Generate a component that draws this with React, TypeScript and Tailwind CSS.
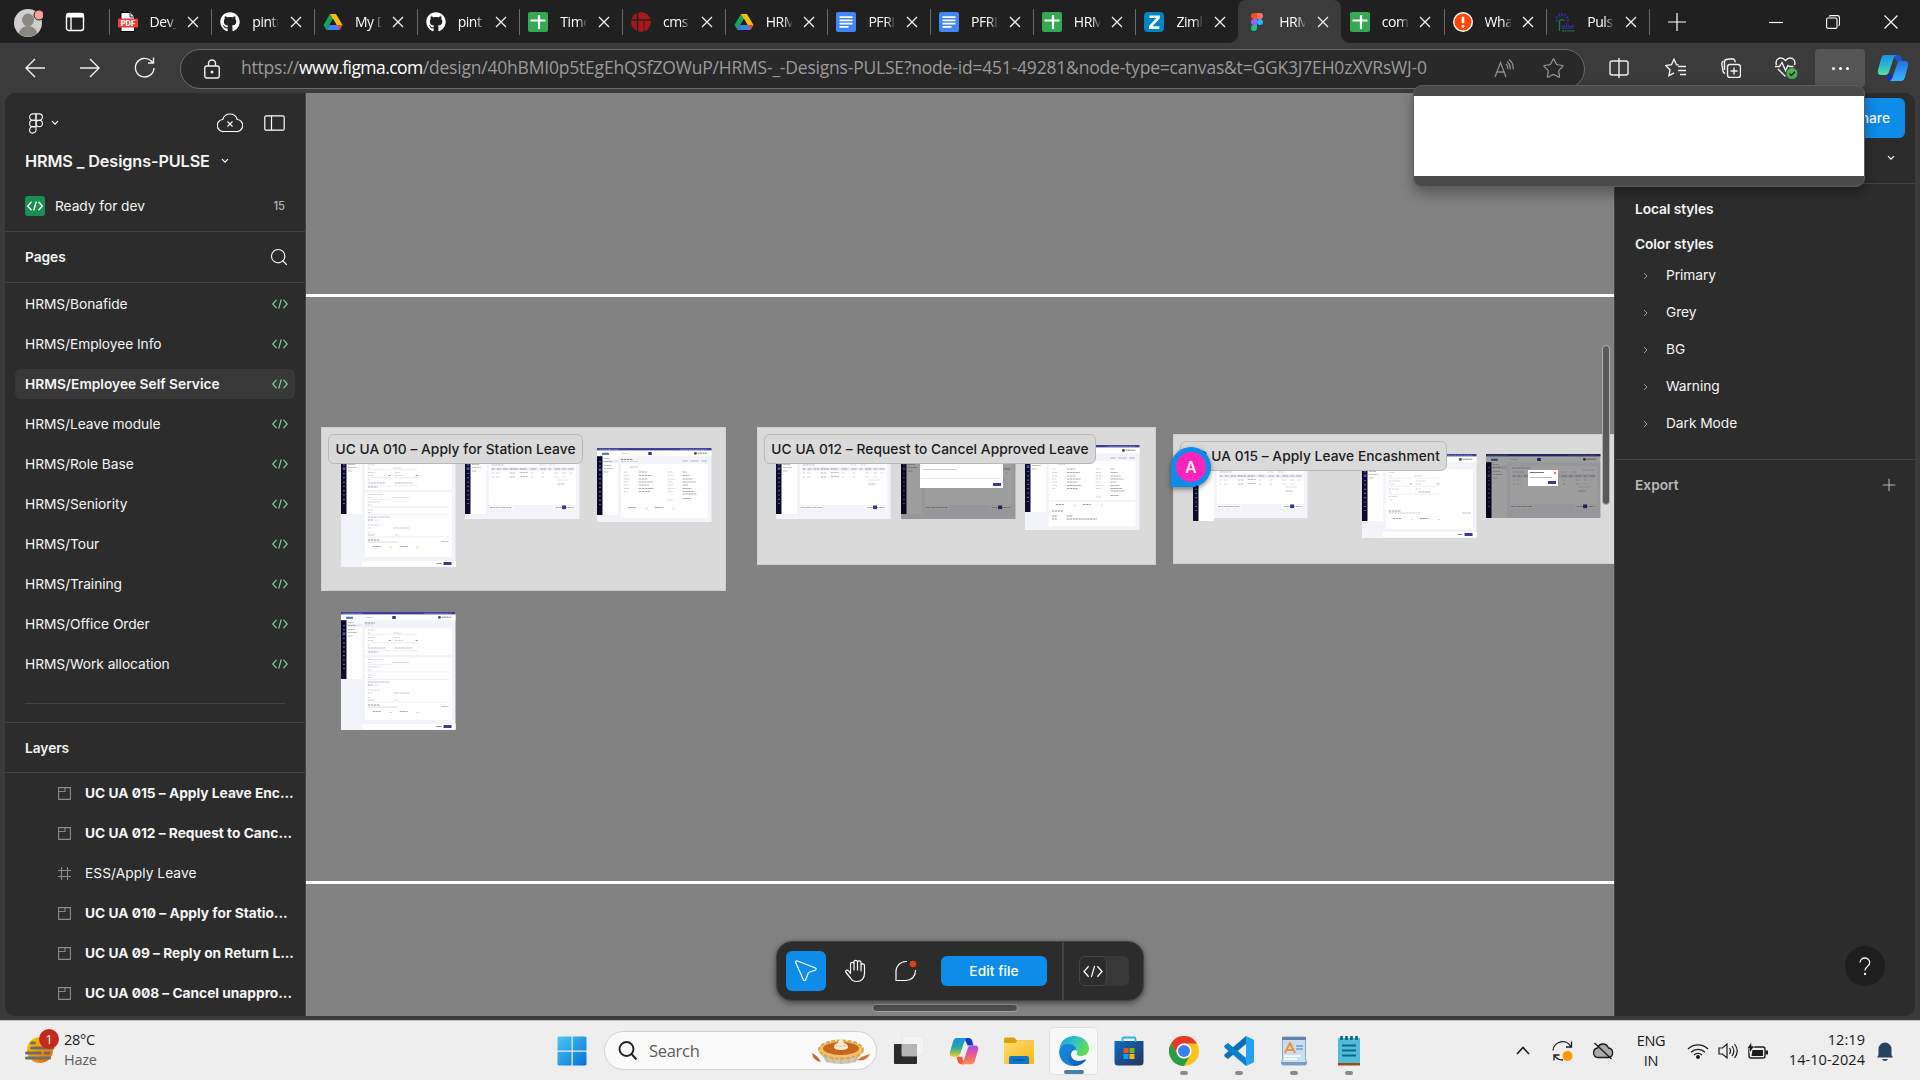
import React from "react";
import { FaGithub } from "react-icons/fa";
import { Figma, Search, Star, Plus } from "lucide-react";

type Kids = { children?: React.ReactNode };

/* ---------- favicons ---------- */
const Pdf = () => (
  <svg width="20" height="20" viewBox="0 0 20 20">
    <path d="M3 0.5h9l4.500 4.500v14.500h-13.500z" fill="#fff" stroke="#000" />
    <path d="M12 .5v4.500h4.500" fill="#ddd" stroke="#000" strokeWidth=".8" />
    <rect x="0" y="6.500" width="20" height="9" rx="1" fill="#f33b3b" />
    <text x="10" y="14" fontSize="7.500" fontWeight="800" textAnchor="middle" fill="#fff" fontFamily="Inter, sans-serif">PDF</text>
  </svg>
);
const Git = () => <FaGithub size={20} color="#fff" />;
const Drive = () => (
  <svg width="20" height="20" viewBox="0 0 20 20">
    <path d="M7 2h6l-6.500 11L3.500 18 .5 13z" fill="#1ea05a" />
    <path d="M7 2h6l6.500 11h-6z" fill="#fbbc05" />
    <path d="M3.500 18 6.500 13h13L16.500 18z" fill="#3f80f3" />
    <path d="M14 13h5.500L16.500 18z" fill="#e94235" />
    <path d="M10 6.800 6.500 13h7z" fill="#202020" />
  </svg>
);
const Sheets = () => (
  <svg width="20" height="20" viewBox="0 0 20 20">
    <rect width="20" height="20" rx="2" fill="#34a853" />
    <path d="M11 3v14M2.500 8.500h15" stroke="#fff" strokeWidth="2.200" />
  </svg>
);
const Docs = () => (
  <svg width="20" height="20" viewBox="0 0 20 20">
    <rect width="20" height="20" rx="2" fill="#4285f4" />
    <path d="M3.500 5.200h13M3.500 8.400h13M3.500 11.600h13M3.500 14.800h9" stroke="#fff" strokeWidth="1.700" />
  </svg>
);
const Cms = () => (
  <svg width="20" height="20" viewBox="0 0 20 20">
    <circle cx="10" cy="10" r="10" fill="#a8181e" />
    <path d="M6.500 0v20M0 8h20" stroke="#202020" strokeWidth="1.500" />
    <path d="M13 9v11" stroke="#202020" strokeWidth=".8" />
  </svg>
);
const Zim = () => (
  <svg width="20" height="20" viewBox="0 0 20 20">
    <rect width="20" height="20" rx="4" fill="#0087c3" />
    <path d="M5.500 4.700h9v1L6.300 14.600v1h9" fill="none" stroke="#fff" strokeWidth="2.600" />
  </svg>
);
const FigmaColor = () => (
  <svg width="20" height="20" viewBox="0 0 20 20">
    <path d="M10 1H7a3 3 0 0 0 0 6h3z" fill="#f24e1e" />
    <path d="M10 1h3a3 3 0 0 1 0 6h-3z" fill="#ff7262" />
    <path d="M10 7H7a3 3 0 0 0 0 6h3z" fill="#a259ff" />
    <circle cx="13" cy="10" r="3" fill="#1abcfe" />
    <path d="M10 13H7a3 3 0 1 0 3 3z" fill="#0acf83" />
  </svg>
);
const Warn = () => (
  <svg width="20" height="20" viewBox="0 0 20 20">
    <circle cx="10" cy="10" r="10" fill="#fff" />
    <circle cx="10" cy="10" r="8.600" fill="#ff4500" />
    <path d="M10 4.800v6.400" stroke="#fff" strokeWidth="2.600" />
    <circle cx="10" cy="14.200" r="1.500" fill="#fff" />
  </svg>
);
const Pulse = () => (
  <svg width="20" height="20" viewBox="0 0 20 20">
    <path d="M3 9 .8 8M3.200 6.500 1 4.500M5 4.500 3.700 1.500M7 4V.8M9.500 4.500l1.300-3M11.300 6.500l2-2M12 9l2-1" stroke="#3730a3" strokeWidth="1.500" />
    <path d="M4.500 19V9a3 3 0 0 1 5 0" fill="none" stroke="#178045" strokeWidth="1.300" />
    <text x="6.500" y="16.500" fontSize="7.500" fontWeight="700" fill="#3730a3" fontFamily="Liberation Serif, serif">ulse</text>
    <path d="M7 18.800h13" stroke="#178045" strokeWidth="1.200" strokeDasharray="2 .6" />
  </svg>
);

const tabs: { t: string; i: React.ReactNode; a?: boolean; s: boolean }[] = [
  { t: "Dev_", i: <Pdf />, s: true },
  { t: "pintu", i: <Git />, s: true },
  { t: "My D", i: <Drive />, s: true },
  { t: "pint", i: <Git />, s: true },
  { t: "Time", i: <Sheets />, s: true },
  { t: "cms", i: <Cms />, s: true },
  { t: "HRM", i: <Drive />, s: true },
  { t: "PFRD", i: <Docs />, s: true },
  { t: "PFRD", i: <Docs />, s: true },
  { t: "HRM", i: <Sheets />, s: true },
  { t: "Zimb", i: <Zim />, s: true },
  { t: "HRM", i: <FigmaColor />, a: true, s: false },
  { t: "com", i: <Sheets />, s: false },
  { t: "Wha", i: <Warn />, s: true },
  { t: "Puls", i: <Pulse />, s: true },
];

const X = () => (
  <svg width="12" height="12" viewBox="0 0 12 12" className="block">
    <path d="M1 1l10 10M11 1 1 11" stroke="#f2f2f2" strokeWidth="1.300" />
  </svg>
);

function TabBar() {
  return (
    <div className="flex h-[43px] bg-[#202020]">
      <div className="flex w-[109px] items-center">
        <svg width="30" height="36" viewBox="0 0 30 36" className="mt-[-2px] ml-[13px]">
          <circle cx="15" cy="20" r="14" fill="#d0cfcd" />
          <ellipse cx="15" cy="17" rx="6" ry="6.500" fill="#8a8783" />
          <path d="M6 30.500a9 7.500 0 0 1 18 0 14 14 0 0 1-18 0z" fill="#8a8783" />
          <circle cx="26" cy="12" r="5" fill="#f9a09b" stroke="#202020" />
        </svg>
        <svg width="20" height="20" viewBox="0 0 20 20" className="ml-[22px]">
          <rect x="1.500" y="1.500" width="17" height="17" rx="2.500" fill="none" stroke="#fff" strokeWidth="1.400" />
          <path d="M1.500 1.500h17v4h-17z" fill="#fff" />
          <path d="M6 5v13" stroke="#fff" strokeWidth="1.400" />
        </svg>
      </div>
      {tabs.map((x, k) => (
        <div
          key={k}
          className={
            x.a
              ? "relative flex h-[43px] w-[102.700px] shrink-0 items-center rounded-t-[8px] bg-[#3b3b3b]"
              : "relative flex h-[43px] w-[102.700px] shrink-0 items-center"
          }
        >
          {x.a && (
            <>
              <span className="absolute bottom-0 -left-2 size-2 bg-[radial-gradient(circle_at_0_0,#202020_7.500px,#3b3b3b_8px)]" />
              <span className="absolute -right-2 bottom-0 size-2 bg-[radial-gradient(circle_at_100%_0,#202020_7.500px,#3b3b3b_8px)]" />
            </>
          )}
          <span className={x.s ? "h-[26px] w-px bg-[#6a6a6a]" : "h-[26px] w-px"} />
          <span className="ml-[8px] mt-px flex w-5">{x.i}</span>
          <span className="ml-[12px] w-[26px] overflow-hidden font-['Open_Sans',sans-serif] text-[14px] tracking-[-0.450px] whitespace-nowrap text-white [mask-image:linear-gradient(90deg,#000_68%,rgba(0,0,0,0.150)_100%)]">
            {x.t}
          </span>
          <span className="ml-[11.500px]"><X /></span>
        </div>
      ))}
      <span className="mt-[9px] h-[26px] w-px bg-[#6a6a6a]" />
      <div className="flex w-[54px] items-center justify-center">
        <svg width="18" height="18"><path d="M9 0v18M0 9h18" stroke="#fff" strokeWidth="1.200" /></svg>
      </div>
      <div className="ml-[44px] flex w-[57px] items-center justify-center">
        <svg width="14" height="14"><path d="M0 7.500h14" stroke="#fff" strokeWidth="1.200" /></svg>
      </div>
      <div className="flex w-[57px] items-center justify-center">
        <svg width="14" height="14" viewBox="0 0 14 14" fill="none" stroke="#fff" strokeWidth="1.100">
          <rect x=".6" y="3" width="10.400" height="10.400" rx="1.500" />
          <path d="M3.200 1.500Q3.500.6 5 .6h6.500q2 0 2 2V9q0 1.300-1 1.800" />
        </svg>
      </div>
      <div className="flex w-[59px] items-center justify-center">
        <svg width="14" height="14"><path d="M.5.5l13 13M13.500.5l-13 13" stroke="#fff" strokeWidth="1.200" /></svg>
      </div>
    </div>
  );
}

const CopilotBlue = () => (
  <svg width="32" height="28" viewBox="0 0 32 28">
    <defs>
      <linearGradient id="cb1" x1="0" y1="0" x2="0" y2="1"><stop offset="0" stopColor="#1a8fe6" /><stop offset=".5" stopColor="#29b6d6" /><stop offset="1" stopColor="#5fdd9a" /></linearGradient>
      <linearGradient id="cb2" x1="0" y1="0" x2="0" y2="1"><stop offset="0" stopColor="#2a6ee0" /><stop offset="1" stopColor="#35b5ff" /></linearGradient>
    </defs>
    <path d="M16 1h5q3 0 4 4l1 3h-6z" fill="#1558c8" />
    <path d="M10 20l4 0 2 7h-2q-3 0-4-4z" fill="#1530c0" />
    <path d="M8 1h11q-2 1-3 5l-4 12q-1 3-4 3H4q-4 0-3-5l3-11Q5 1 8 1z" fill="url(#cb1)" />
    <path d="M24 27H13q2-1 3-5l4-12q1-3 4-3h4q4 0 3 5l-3 11q-1 4-4 4z" fill="url(#cb2)" />
  </svg>
);

const Cell = ({ children }: Kids) => <div className="flex w-[56px] items-center justify-center">{children}</div>;

function Toolbar() {
  const st = { fill: "none", stroke: "#f0f0f0", strokeWidth: 1.4 } as const;
  return (
    <div className="flex h-[50px] items-center bg-[#3b3b3b]">
      <div className="flex w-[180px] shrink-0 items-center">
        <svg width="20" height="20" viewBox="0 0 20 20" className="ml-[25px]" {...st}><path d="M20 10H1M10 1 1 10l9 9" /></svg>
        <svg width="20" height="20" viewBox="0 0 20 20" className="ml-[35px]" {...st}><path d="M0 10h19M10 1l9 9-9 9" /></svg>
        <svg width="22" height="22" viewBox="0 0 22 22" className="ml-[34px]" {...st}><path d="M20 11a9.300 9.300 0 1 1-3-7.200L19.500 6M19.500 0.500V6H14" /></svg>
      </div>
      <div className="mt-px flex h-[40px] w-[1405px] shrink-0 items-center rounded-full border border-[#6b6b6b] bg-[#292929]">
        <svg width="16" height="20" viewBox="0 0 16 20" className="ml-[23px]" {...st}>
          <rect x=".8" y="7" width="14.400" height="12" rx="2" /><path d="M4.500 7V4.500a3.500 3.500 0 0 1 7 0V7" /><circle cx="8" cy="13" r=".8" fill="#fff" />
        </svg>
        <div className="mt-[-2px] ml-[21px] w-[1226px] shrink-0 font-['Open_Sans',sans-serif] text-[17.500px] whitespace-nowrap text-[#9b9b9b]">
          <span className="tracking-[-0.200px]">https://<span className="tracking-[-0.550px] text-white">www.figma.com</span>/design/40hBMI0p5tEgEhQSfZOWuP/HRMS-_-Designs-PULSE?node-id=451-49281&amp;node-type=canvas&amp;t=GGK3J7EH0zXVRsWJ-0</span>
        </div>
        <svg width="20" height="20" viewBox="0 0 20 20" className="ml-[27px]" fill="none" stroke="#8e8e8e" strokeWidth="1.300">
          <path d="M1 18 6.500 3.500 12 18M3 13h7M12 5q2.500 2 1.500 5M13 2.500q4 3 3 8M15 0.500q5 4 4 10" />
        </svg>
        <Star size={23} strokeWidth={1.2} color="#9a9a9a" className="ml-[28px]" />
      </div>
      <div className="ml-[6px] flex">
        <Cell><svg width="20" height="20" viewBox="0 0 20 20" {...st}><path d="M7.500 3H3Q1 3 1 5v10q0 2 2 2h4.500M12.500 3H17q2 0 2 2v10q0 2-2 2h-4.500M10 0v20M7.500 3H10M10 17H7.500M12.500 3H10M10 17h2.500" /></svg></Cell>
        <Cell><svg width="21" height="20" viewBox="0 0 21 20" {...st}><path d="M13.500 7 11.500 6.700 9 1.200 6.500 6.700.8 7.500l4.200 4.200-1 6L9 14.800M13 8.500h8M13 12.500h8M15 16.500h6" /></svg></Cell>
        <Cell><svg width="20" height="20" viewBox="0 0 20 20" className="-ml-px" {...st}><rect x="6.500" y="6.500" width="13" height="13" rx="2.500" /><path d="M13 9.500v7M9.500 13h7M4 15.500Q2.500 15 2 13.500L.8 5.500q0-2 1.800-2.300M3.500 12V4q0-2 1.500-2.500L11 .8q2 0 2.700 1.500l.6 2" /></svg></Cell>
        <Cell>
          <svg width="23" height="22" viewBox="0 0 23 22" className="-ml-px" {...st}>
            <path d="M1.500 8Q0 3.500 3.500 1.500 7.500 0 10.500 3.500 13.500 0 17.500 1.500 21 3.500 19.500 8M3 12l7.500 7.500M0 9.500h4.500l2.500-4 3.500 8 2.500-5 1.500 1h4" />
            <circle cx="17" cy="16.500" r="5.500" fill="#4caf50" stroke="none" /><path d="m14.500 16.500 2 2 3.500-3.800" stroke="#202020" />
          </svg>
        </Cell>
      </div>
      <div className="mr-[12px] flex h-[38px] w-[50px] shrink-0 items-center justify-center gap-[4px] rounded-[4px] bg-[#555]">
        <span className="size-[3px] rounded-full bg-white" /><span className="size-[3px] rounded-full bg-white" /><span className="size-[3px] rounded-full bg-white" />
      </div>
      <CopilotBlue />
    </div>
  );
}

/* ---------- left panel ---------- */
const Chev = () => <svg width="8" height="6" viewBox="0 0 8 6"><path d="m1 1.200 3 3 3-3" fill="none" stroke="#fff" strokeWidth="1.200" /></svg>;
const Code = ({ c, w = 16, s = 1.2 }: { c: string; w?: number; s?: number }) => (
  <svg width={w} height={w * 0.75} viewBox="0 0 16 12"><path d="M4.500 1.800.8 6l3.700 4.200M11.500 1.800 15.200 6l-3.700 4.200M9.300 1.500l-2.600 9" fill="none" stroke={c} strokeWidth={s} /></svg>
);
const pages = ["Bonafide", "Employee Info", "Employee Self Service", "Leave module", "Role Base", "Seniority", "Tour", "Training", "Office Order", "Work allocation"];
const layers = ["UC UA 015 – Apply Leave Enc...", "UC UA 012 – Request to Canc...", "ESS/Apply Leave", "UC UA 010 – Apply for Statio...", "UC UA 09 – Reply on Return L...", "UC UA 008 – Cancel unappro..."];

function Left() {
  return (
    <div className="flex h-[923px] w-[301px] shrink-0 flex-col overflow-hidden rounded-l-[10px] border-r border-[#444] bg-[#2c2c2c] text-[13.750px] tracking-[-0.050px] text-[#f5f5f5]">
      <div className="mt-[14px] flex h-[32px] items-center pl-[20px]">
        <Figma size={22} strokeWidth={1.2} />
        <span className="ml-[4px] flex"><Chev /></span>
        <svg width="26" height="20" viewBox="0 0 26 20" className="ml-[158px]" fill="none" stroke="#fff" strokeWidth="1.200">
          <path d="M7 18.500a6 6 0 0 1-1.300-12Q7.500 1 13 1t7.300 5.500a6 6 0 0 1-1.300 12z" /><path d="m10.500 8.500 5 5M15.500 8.500l-5 5" />
        </svg>
        <svg width="21" height="16" viewBox="0 0 21 16" className="ml-[21px]" fill="none" stroke="#fff" strokeWidth="1.200"><rect x=".8" y=".8" width="19.400" height="14.400" rx="1.500" /><path d="M7.500 1v14" /></svg>
      </div>
      <div className="mt-[7px] flex h-[30px] items-center pl-[20px]">
        <span className="text-[16.250px] font-semibold tracking-[-0.120px] whitespace-nowrap">HRMS _ Designs-PULSE</span>
        <span className="ml-[11px] flex"><Chev /></span>
      </div>
      <div className="flex h-[56px] items-center border-b border-[#444] pt-[5px] pr-[20px] pl-[20px]">
        <span className="flex size-5 items-center justify-center rounded-[3px] bg-[#198f51]"><Code c="#fff" s={1.4} /></span>
        <span className="ml-[10px] flex-1">Ready for dev</span>
        <span className="text-[11.250px] font-medium text-[#b3b3b3]">15</span>
      </div>
      <div className="flex h-[51px] shrink-0 items-center justify-between border-b border-[#444] pr-[16px] pl-[20px] font-semibold">
        Pages <Search size={20} strokeWidth={1.4} />
      </div>
      <div className="flex h-[440px] shrink-0 flex-col border-b border-[#444] pt-px">
        {pages.map((p, k) => (
          <div key={p} className={k === 2 ? "mx-[10px] my-[5px] flex h-[30px] shrink-0 items-center justify-between rounded-[6px] bg-[#383838] pr-[7px] pl-[10px] font-semibold tracking-[0]" : "mx-[10px] my-[5px] flex h-[30px] shrink-0 items-center justify-between pr-[7px] pl-[10px]"}>
            <span>HRMS/{p}</span><Code c="#79d297" />
          </div>
        ))}
        <div className="mx-[20px] mt-[19px] h-px shrink-0 bg-[#444]" />
      </div>
      <div className="flex h-[50px] shrink-0 items-center border-b border-[#444] pt-px pl-[20px] font-semibold">Layers</div>
      {layers.map((p, k) => (
        <div key={p} className="flex h-[40px] shrink-0 items-center pr-[2px] pl-[53px]">
          <svg width="13" height="13" viewBox="0 0 13 13" fill="none" stroke="#8c8c8c" strokeWidth="1.100">
            {k === 2 ? <path d="M3.500 0v13M9.500 0v13M0 3.500h13M0 9.500h13" /> : <path d="M.6.6h11.800v11.800H.6zM.6 4.500h6.400V.6" />}
          </svg>
          <span className={k === 2 ? "ml-[14px] tracking-[0.050px]" : "ml-[14px] font-bold tracking-[-0.020px] whitespace-nowrap [font-feature-settings:'zero']"}>{p}</span>
        </div>
      ))}
    </div>
  );
}

/* ---------- right panel ---------- */
function Right() {
  return (
    <div className="relative h-[923px] w-[301px] shrink-0 rounded-r-[10px] border-l border-[#444] bg-[#2c2c2c] text-[13.750px] text-[#f5f5f5]">
      <div className="flex h-[91px] flex-col items-end border-b border-[#444]">
        <div className="mt-[5px] mr-[10px] flex h-[40px] w-[75px] items-center justify-end rounded-[6px] bg-[#0d8ce9] pr-[15px] font-medium">Share</div>
        <span className="mt-[17px] mr-[20px] flex"><Chev /></span>
      </div>
      <div className="h-[276px] border-b border-[#444] pt-[12px] pl-[20px]">
        <div className="flex h-[26px] items-center font-semibold tracking-[-0.080px]">Local styles</div>
        <div className="mt-[9px] flex h-[26px] items-center font-semibold tracking-[-0.080px]">Color styles</div>
        {["Primary", "Grey", "BG", "Warning", "Dark Mode"].map((s) => (
          <div key={s} className="flex h-[37px] items-center pl-[8px]">
            <svg width="6" height="8" viewBox="0 0 6 8"><path d="m1 1 3 3-3 3" fill="none" stroke="#999" /></svg>
            <span className="ml-[17px] tracking-[-0.050px]">{s}</span>
          </div>
        ))}
      </div>
      <div className="flex h-[50px] items-center justify-between pr-[16px] pl-[20px] font-semibold text-[#b8b8b8]">Export <Plus size={20} strokeWidth={1.2} /></div>
      <div className="absolute top-[853px] right-[30px] flex size-[40px] items-center justify-center rounded-full bg-[#1e1e1e]">
        <svg width="12" height="19" viewBox="0 0 12 19" fill="none" stroke="#fff" strokeWidth="1.300"><path d="M1 5.500A4.800 4.800 0 0 1 6 1a4.600 4.600 0 0 1 4.700 4.700C10.700 9.500 6 9.500 6 13.500" /><circle cx="6" cy="17" r=".5" /></svg>
      </div>
    </div>
  );
}

/* ---------- canvas ---------- */
type Mark = [number, number, number, string?];
const formMarks: Mark[] = [
  [24, 11, 10, "#333"], [24, 13, 8], [27, 18, 7], [27, 21, 3], [52, 21, 8, "#aaa"], [27, 25.500, 7], [54, 25.500, 5], [27, 28.500, 6], [48, 28.500, 2, "#333"], [54, 28.500, 8], [75, 28.500, 2, "#333"],
  [27, 33, 2], [27, 36, 18, "#777"], [54, 36, 18, "#777"], [27, 40, 10, "#55a"], [27, 47.500, 15], [27, 50.500, 4], [52, 50.500, 16, "#aaa"], [27, 55, 12], [27, 58, 4], [27, 63, 5], [27, 65.500, 4], [27, 70, 22, "#777"], [27, 73, 5, "#44a"], [34, 73, 4],
  [27, 78, 12], [27, 81, 4], [53, 81, 16, "#888"], [27, 85.500, 2], [27, 88, 7, "#888"], [54, 88, 4], [27, 93, 12, "#333"], [27, 95, 30], [101, 94.500, 7, "#66b"], [32, 99.500, 8, "#555"], [49, 100.500, 2, "#f66"], [59, 99.500, 8, "#555"], [76, 100.500, 2, "#f66"],
];
const shortMarks: Mark[] = [
  [24, 11, 14, "#333"], [27, 18.500, 6], [27, 22, 3], [52, 22, 8], [27, 27, 12], [54, 27, 10], [27, 30, 6], [48, 30, 3, "#555"], [54, 30, 6], [75, 30, 3, "#555"], [27, 35, 10], [54, 35, 5], [27, 38, 2], [57, 38, 12, "#666"], [27, 42.500, 8], [28, 46, 3],
  [27, 57, 12, "#444"], [27, 59, 33, "#999"], [101, 59, 8, "#66b"], [31, 64.500, 9, "#444"], [49, 65.500, 2, "#f88"], [58, 64.500, 9, "#444"], [76, 65.500, 2, "#f88"],
];
const tableMarks: Mark[] = [
  [26, 14, 18, "#555"], [97, 16, 12], [27, 18, 12, "#777"], [75, 18, 6], [85, 18, 6], [27, 22, 3, "#557"], [32, 22, 4, "#557"], [38, 22, 5, "#557"], [45, 22, 8, "#446"], [55, 22, 7, "#446"], [66, 22, 6, "#557"], [76, 22, 5, "#557"], [84, 22, 3, "#557"], [90, 22, 6, "#446"], [98, 22, 4, "#557"], [104, 22, 5, "#557"],
  [27, 26, 2], [31, 26, 4], [45, 26, 6, "#777"], [55, 25.500, 8, "#777"], [66, 26, 3], [77, 26, 3], [90, 26, 4], [98, 26, 4, "#3c9"], [105, 26, 3],
  [27, 30, 2], [31, 30, 4], [45, 30, 6, "#777"], [55, 29.500, 8, "#777"], [66, 30, 3], [77, 30, 3], [90, 30, 4], [98, 30, 4, "#fa5"], [93, 33, 11, "#bbc"], [93, 37, 7, "#666"],
];
const detailMarks: Mark[] = [
  [24, 11.500, 12, "#222"], [24, 13.500, 17], [86, 13, 5, "#55a"], [94, 13, 8, "#55a"], [105, 13, 5, "#55a"], [33, 19, 8, "#777"],
  ...[24, 27.500, 31, 34, 37, 40.500, 43.500].flatMap((y, i): Mark[] => [[27, y, 4 + (i % 3)], [42, y, 8 + ((i * 5) % 9), "#555"], [71, y, 5 + (i % 3)], [86, y, 4 + ((i * 3) % 10), "#555"]]),
  [86, 46, 14, "#555"], [86, 50.500, 8, "#555"], [71, 52, 6], [31, 59.500, 8, "#444"], [49, 60.500, 2, "#f77"], [58, 59.500, 8, "#444"], [76, 60.500, 2, "#f77"],
];

type ThumbProps = { h: number; kind: "form" | "short" | "table" | "detail"; dark?: boolean };
function Thumb({ h, kind, dark }: ThumbProps) {
  const marks = { form: formMarks, short: shortMarks, table: tableMarks, detail: detailMarks }[kind];
  const side = Math.min(67, dark ? h : 67);
  const tall = kind === "form" || kind === "short";
  return (
    <svg width="114.500" height={Math.max(h, side)} viewBox={`0 0 115 ${Math.max(h, side)}`} preserveAspectRatio="none" className="block">
      <rect width="115" height={h} fill="#f3f4fa" />
      <rect width="115" height="2.600" fill="#3d3f97" />
      <path d="M2 1.300h20M83 1.300h28" stroke="#8b8dd0" strokeWidth=".7" strokeDasharray="2 .6 3 .7" />
      <rect y="2.600" width="115" height="5.600" fill="#fff" />
      <path d="M5 5.800h7" stroke="#4677b5" strokeWidth="2" />
      <path d="M25 5.500h7" stroke="#bbb" strokeWidth=".6" />
      <rect x="51.500" y="4" width="3.500" height="3" fill="#34368e" />
      <rect x="97.500" y="4" width="2.700" height="2.700" rx="1" fill="#5b4636" />
      <path d="M101 5.200h10" stroke="#777" strokeWidth=".9" strokeDasharray="2 .4" />
      <rect x="5.500" y="8.200" width="15.700" height={side - 8.2} fill="#fff" />
      <rect y="8.200" width="5.500" height={side - 8.2} fill="#0c0a2e" />
      <rect x="1.500" y="20" width="3" height="3" fill="#34368e" />
      <path d={`M3 13V${side - 10}`} stroke="#8a8ab0" strokeWidth="1.300" strokeDasharray="1.200 3.100" />
      <rect x="6" y="12" width="15" height="3" fill="#e9e9fa" />
      <path d="M7 10.500h6M7 13.500h8M7 17.500h7M7 20.500h9M7 24h5" stroke="#888" strokeWidth=".6" strokeDasharray="2 .5" />
      {kind === "form" && <path d={`M24 16.500h87V43H24zM24 45.500h87V${h - 10}H24z`} fill="#fff" />}
      {kind === "short" && <path d={`M24 15.500h87.500V${h - 9}H24z`} fill="#fff" />}
      {kind === "table" && <path d={`M24 12h87.500V${h - 14}H24z`} fill="#fff" />}
      {kind === "detail" && <path d={`M24 16h87V${h - 4}H24z`} fill="#fff" />}
      {kind === "detail" && h > 80 && (
        <>
          <path d="M24 56h87" stroke="#dfe0ea" strokeWidth=".6" />
          <path d="M27 66h11M27 71h5M42 71h6M27 74h5M42 74h30" stroke="#667" strokeWidth=".7" strokeDasharray="2.300 .6" />
        </>
      )}
      {kind === "table" && <rect x="26" y="20.500" width="84" height="3" fill="#ececf8" />}
      {tall && (
        <>
          <rect x="21.200" y={h - 6} width="94" height="5.400" fill="#fff" />
          <rect x="103" y={h - 5} width="8" height="3" fill="#3a3c94" />
          <path d={`M96 ${h - 3.5}h5`} stroke="#777" strokeWidth=".8" />
          {(kind === "form" ? [20, 28, 36] : [21.5, 29.5, 37.5]).map((y) => <path key={y} d={`M26.500 ${y + 2.7}h24M53 ${y + 2.7}h24`} stroke="#e2e2ea" strokeWidth=".6" />)}
          {kind === "form" && <path d="M26.500 52.500h24M26.500 60h82M26.500 67.500h82M26.500 90h82" stroke="#e2e2ea" strokeWidth=".6" />}
        </>
      )}
      {kind === "table" && (
        <>
          <rect x="24" y={h - 13} width="24" height="3" fill="#fff" /><rect x="89" y={h - 13} width="22" height="3" fill="#fff" />
          <path d={`M25 ${h - 11.5}h22M91 ${h - 11.5}h19`} stroke="#888" strokeWidth=".7" strokeDasharray="3 .6 2 .6" />
          <rect x="97.500" y={h - 13.5} width="4" height="3.600" fill="#34368e" />
        </>
      )}
      {marks.filter((m) => m[1] < h - 5).map(([x, y, w, c], i) => (
        <path key={i} d={`M${x} ${y}h${w}`} stroke={c ?? "#aab"} strokeWidth=".7" strokeOpacity=".75" strokeDasharray="2.300 .6" />
      ))}
      {dark && <rect width="115" height={h} fill="#000" fillOpacity=".38" />}
    </svg>
  );
}

const Label = ({ children }: Kids) => (
  <div className="flex h-[30px] items-center justify-center rounded-[6px] border border-[#b9b9b9] bg-[#dadada] pt-px text-[13.750px] font-medium tracking-[0.060px] whitespace-nowrap text-[#1a1a1a]">{children}</div>
);

function Canvas() {
  return (
    <div className="relative h-[923px] w-[1308px] shrink-0 overflow-hidden bg-[#828282]">
      <div className="absolute top-[201px] left-0 h-[3px] w-full bg-white" />
      <div className="absolute top-[788px] left-0 h-[3px] w-full bg-white" />

      <div className="absolute top-[334px] left-[15px] h-[164px] w-[405px] border border-[#cfcfcf] bg-[#dadada]" />
      <div className="absolute top-[354px] left-[35px]"><Thumb h={120} kind="form" /></div>
      <div className="absolute top-[354px] left-[159px]"><Thumb h={72} kind="table" /></div>
      <div className="absolute top-[355px] left-[291px]"><Thumb h={74} kind="detail" /></div>
      <div className="absolute top-[519px] left-[35px]"><Thumb h={118} kind="form" /></div>
      <div className="absolute top-[341px] left-[22px] w-[255px]"><Label>UC UA 010 – Apply for Station Leave</Label></div>

      <div className="absolute top-[334px] left-[451px] h-[138px] w-[399px] border border-[#cfcfcf] bg-[#dadada]" />
      <div className="absolute top-[354px] left-[470px]"><Thumb h={72} kind="table" /></div>
      <div className="absolute top-[354px] left-[595px]"><Thumb h={72} kind="table" dark /></div>
      <div className="absolute top-[364px] left-[614px] flex h-[31px] w-[83px] items-end justify-end bg-white p-[2px]"><span className="h-[3px] w-[8px] bg-[#3a3c94]" /></div>
      <div className="absolute top-[376px] left-[617px] h-px w-[33px] bg-[#ccc]" />
      <div className="absolute top-[385px] left-[616px] h-px w-[79px] bg-[#e4e4ec]" />
      <div className="absolute top-[352px] left-[719px]"><Thumb h={85} kind="detail" /></div>
      <div className="absolute top-[341px] left-[458px] w-[332px]"><Label>UC UA 012 – Request to Cancel Approved Leave</Label></div>

      <div className="absolute top-[341px] left-[867px] h-[130px] w-[445px] border border-[#cfcfcf] bg-[#dadada]" />
      <div className="absolute top-[361px] left-[887px]"><Thumb h={64} kind="table" /></div>
      <div className="absolute top-[361px] left-[1056px]"><Thumb h={84} kind="short" /></div>
      <div className="absolute top-[361px] left-[1180px]"><Thumb h={64} kind="table" dark /></div>
      <div className="absolute top-[377px] left-[1222px] flex h-[16px] w-[30px] flex-col justify-between bg-white p-[2px]">
        <span className="flex justify-between"><span className="h-px w-[14px] bg-[#777]" /><span className="size-[2px] bg-[#f66]" /></span>
        <span className="h-px w-[22px] bg-[#bbb]" />
        <span className="h-[3px] w-[8px] self-end bg-[#3a3c94]" />
      </div>
      <div className="absolute top-[348px] left-[874px] w-[267px]"><Label>UC UA 015 – Apply Leave Encashment</Label></div>

      <div className="absolute top-[354px] left-[865px] flex size-[40px] items-center justify-center rounded-full rounded-bl-none bg-[#0d8ce9] shadow-[0_2px_5px_rgba(0,0,0,0.450)]">
        <span className="flex size-[30px] items-center justify-center rounded-full bg-[#ff24bd] text-[16px] font-medium text-white">A</span>
      </div>

      <div className="absolute top-[252px] left-[1296px] h-[160px] w-[8px] rounded-full border border-[#b0b0b0] bg-[#5a5a5a]" />
      <div className="absolute top-[911px] left-[566px] h-[8px] w-[146px] rounded-full border border-[#a0a0a0] bg-[#4f4f4f]" />

      <div className="absolute top-[848px] left-[470px] flex h-[60px] w-[368px] items-center rounded-[16px] border border-[#444] bg-[#2c2c2c] shadow-[0_2px_6px_rgba(0,0,0,0.500)]">
        <span className="ml-[9px] flex size-[40px] items-center justify-center rounded-[6px] bg-[#0d8ce9]">
          <svg width="22" height="22" viewBox="0 0 22 22" fill="none" stroke="#fff" strokeWidth="1.200" strokeLinejoin="round"><path d="M.8 2.800Q.2.500 2.500 1L20.500 8q1.500 1 0 2l-7 2.500-3 7.500q-1 1.500-2 0z" /></svg>
        </span>
        <svg width="24" height="24" viewBox="0 0 24 24" className="ml-[18px]" fill="none" stroke="#fff" strokeWidth="1.200" strokeLinecap="round" strokeLinejoin="round">
          <path d="M6.500 14V5q0-1.700 1.700-1.700T10 5v6V3q0-1.700 1.700-1.700T13.500 3v8V3.500q0-1.700 1.700-1.700T17 3.500V12V6.500q0-1.700 1.700-1.700t1.800 1.700V14q0 8.500-8 8.500-4 0-6-3.500L2 13.500q-.8-1.700.5-2.300 1.200-.5 2.200.8l1.800 2.500" />
        </svg>
        <svg width="22" height="22" viewBox="0 0 22 22" className="ml-[27px]" fill="none" stroke="#fff" strokeWidth="1.200">
          <path d="M12 1.500h-1A10 10 0 0 0 1 11.500v9h10a9.500 9.500 0 0 0 9.500-9.500v-1" /><circle cx="18" cy="4" r="3.300" fill="#e03e1a" stroke="none" />
        </svg>
        <span className="ml-[24px] flex h-[30px] w-[106px] items-center justify-center rounded-[6px] bg-[#0d8ce9] text-[13.750px] font-medium tracking-[0.060px] text-white">Edit file</span>
        <span className="ml-[15px] h-[58px] w-[2px] bg-[#444]" />
        <span className="ml-[15px] flex h-[30px] w-[50px] rounded-[6px] bg-[#383838]">
          <span className="flex h-[30px] w-[28px] items-center justify-center rounded-[6px] border border-[#444] bg-[#2c2c2c]"><Code c="#fff" w={20} s={1} /></span>
        </span>
      </div>
    </div>
  );
}

/* ---------- taskbar ---------- */
const TaskItem = ({ children, on, run }: Kids & { on?: boolean; run?: boolean }) => (
  <div className={on ? "relative mx-[3px] flex h-[48px] w-[49px] shrink-0 items-center justify-center rounded-[5px] border border-[#e0e0e0] bg-[#f8f8f8]" : "relative mx-[3px] flex h-[48px] w-[49px] shrink-0 items-center justify-center"}>
    {children}
    {on && <span className="absolute bottom-0 h-[4px] w-[20px] rounded-full bg-[#4d7fa5]" />}
    {run && <span className="absolute bottom-0 h-[4px] w-[8px] rounded-full bg-[#8a8a8a]" />}
  </div>
);

const Pie = () => (
  <svg width="60" height="28" viewBox="0 0 60 28">
    <path d="M9 15h42l-6 10q-15 4-30 0z" fill="#cfc6b6" />
    <path d="M13 18l4 7M21 20l2 6M30 20v7M39 20l-2 6M47 18l-4 7" stroke="#b9b09f" />
    <ellipse cx="30" cy="12.500" rx="22" ry="9" fill="#f1c36c" stroke="#dda548" strokeWidth="2" strokeDasharray="4 1.500" />
    <ellipse cx="30" cy="11.500" rx="18" ry="6.500" fill="#c8661a" />
    <path d="M23 10q0-3 4-4 1-4 3-5 2 2 3 5 4 1 4 4 0 3-7 3t-7-3z" fill="#f6ead2" />
    <path d="M25 8.500q5 2 10 0" stroke="#dcc9a3" fill="none" />
    <path d="M1 16q6 3 9 9-8-1-9-9z" fill="#c9662a" /><path d="M59 17q-4 8-13 6 5-4 13-6z" fill="#d9702a" />
  </svg>
);
const CopilotColor = () => (
  <svg width="30" height="28" viewBox="0 0 32 28">
    <defs>
      <linearGradient id="cc1" x1="0" y1="0" x2="0" y2="1"><stop offset="0" stopColor="#1590e8" /><stop offset=".5" stopColor="#25a8a0" /><stop offset="1" stopColor="#e6d020" /></linearGradient>
      <linearGradient id="cc2" x1="0" y1="0" x2="0" y2="1"><stop offset="0" stopColor="#a64df0" /><stop offset=".5" stopColor="#f05a90" /><stop offset="1" stopColor="#ff8a48" /></linearGradient>
    </defs>
    <path d="M16 0h5q3 0 4 4l1 4h-6z" fill="#1838c8" /><path d="M8 20h6l2 8h-3q-3 0-4-4z" fill="#f25a3a" />
    <path d="M8 0h11q-2 1-3 5l-4 12q-1 3-4 3H4q-4 0-3-5L4 5Q5 0 8 0z" fill="url(#cc1)" />
    <path d="M24 28H13q2-1 3-5l4-12q1-3 4-3h4q4 0 3 5l-3 10q-1 5-4 5z" fill="url(#cc2)" />
  </svg>
);
const Edge = () => (
  <svg width="30" height="30" viewBox="0 0 30 30">
    <defs>
      <linearGradient id="e1" x1="0" y1="0" x2="1" y2=".4"><stop offset="0" stopColor="#1b9de0" /><stop offset=".55" stopColor="#2fc3c8" /><stop offset="1" stopColor="#62dd50" /></linearGradient>
      <linearGradient id="e2" x1="0" y1="0" x2="1" y2="1"><stop offset="0" stopColor="#1a8ae0" /><stop offset="1" stopColor="#0c4c9c" /></linearGradient>
    </defs>
    <path d="M.5 13C1.500 5 7.500 0 15 0c9 0 15 6 15 12.500 0 5-4 7.500-8 7.500-3 0-5-1-4.500-2.500 1.500-1.500 1-6.500-4-8C8 8 2.500 9 .5 13z" fill="url(#e1)" />
    <path d="M.2 15C1 10 5 8 9 8c5 0 9 3 9 7-3-3-7 0-6 5 1 4 6 7 15 3-3 5-8 7-12 7C6 30-.5 23 .2 15z" fill="#1583d8" />
    <path d="M9 12c-4 6-1 15 6.500 18C21 30 25 27 27.500 23.500c-6 3-13 2-15-2.500-1.500-4 1-7 4-7C13 11 10.500 11 9 12z" fill="url(#e2)" opacity=".85" />
  </svg>
);

function Taskbar() {
  return (
    <div className="flex h-[60px] items-center border-t border-[#c4c4c4] bg-[#eee] font-['Open_Sans',sans-serif] text-[14.500px] leading-[20px] tracking-[-0.300px] text-[#1b1b1b]">
      <div className="flex w-[544px] items-center">
        <svg width="36" height="36" viewBox="0 0 36 36" className="mb-[9px] ml-[24px]">
          <defs><linearGradient id="sun" x1="0" y1="0" x2="1" y2="1"><stop offset="0" stopColor="#fad000" /><stop offset="1" stopColor="#e8600c" /></linearGradient></defs>
          <circle cx="16" cy="22" r="13" fill="url(#sun)" />
          <path d="M7.500 15h3M7.500 20H29M2.500 25h14M21 25h4M2.500 30h23" stroke="#6e6e6e" strokeWidth="3" strokeLinecap="round" />
          <circle cx="25" cy="11" r="10" fill="#c42b1c" />
          <text x="25" y="15.500" textAnchor="middle" fill="#fff" fontSize="12.500">1</text>
        </svg>
        <div className="mb-[2px] ml-[4px]"><div>28°C</div><div className="text-[#606060]">Haze</div></div>
      </div>
      <TaskItem>
        <svg width="30" height="30" viewBox="0 0 30 30"><defs><linearGradient id="w" x1="0" y1="0" x2="1" y2="1"><stop offset="0" stopColor="#4cc8f8" /><stop offset="1" stopColor="#0470d4" /></linearGradient></defs><path d="M1.500.5h13v14H.5v-13zM15.700 .5h12.800l1 1v13H15.700zM.5 15.700H14.500v13.800H1.500l-1-1zM15.700 15.700h13.800v12.800l-1 1H15.700z" fill="url(#w)" /></svg>
      </TaskItem>
      <div className="mr-[4px] ml-[5px] flex h-[39px] w-[273px] shrink-0 items-center rounded-full border border-[#d2d2d2] bg-[#fafafa]">
        <svg width="20" height="20" viewBox="0 0 20 20" className="ml-[13px]" fill="none" stroke="#222" strokeWidth="1.900"><circle cx="8.500" cy="8" r="7" /><path d="m13.500 13 5 5.500" /></svg>
        <span className="ml-[11px] w-[100px] text-[16.500px] text-[#5c5c5c]">Search</span>
        <span className="ml-[62px]"><Pie /></span>
      </div>
      <TaskItem>
        <svg width="30" height="30" viewBox="0 0 30 30"><rect x="0" y="8" width="23" height="20" rx="1" fill="#2b2b2b" /><rect x="8" y="0" width="22" height="20" rx="1" fill="#f2f2f2" fillOpacity=".94" stroke="#ddd" strokeWidth=".7" /><rect x="8" y="8" width="15" height="12" fill="#b5b5b5" /></svg>
      </TaskItem>
      <TaskItem><CopilotColor /></TaskItem>
      <TaskItem>
        <svg width="30" height="30" viewBox="0 0 30 30"><defs><linearGradient id="f" x1="0" y1="0" x2="1" y2="1"><stop offset="0" stopColor="#ffdc70" /><stop offset="1" stopColor="#f8b810" /></linearGradient></defs><path d="M0 3q0-1.500 1.500-1.500H10l3 3h17V10H0z" fill="#dba00c" /><path d="M0 7h11l2.500-2H30v23H0z" fill="url(#f)" /><path d="M5 28v-6q0-2 2-2h16q2 0 2 2v6z" fill="#0f78c8" /><path d="M9 24h12" stroke="#0a4a88" strokeWidth="1.300" /></svg>
      </TaskItem>
      <TaskItem on><Edge /></TaskItem>
      <TaskItem>
        <svg width="30" height="30" viewBox="0 0 30 30"><defs><linearGradient id="s" x1="0" y1="0" x2="1" y2="1"><stop offset="0" stopColor="#0a6cc0" /><stop offset="1" stopColor="#29325c" /></linearGradient></defs><path d="M.5 5h29v21q0 3.500-3.500 3.500H4Q.5 29.500.5 26z" fill="url(#s)" /><path d="M8.500 6V3q0-1.500 1.500-1.500h10q1.500 0 1.500 1.500v3" fill="none" stroke="#20b8f4" strokeWidth="1.800" /><path d="M9.500 12h5v5h-5z" fill="#f25022" /><path d="M15.500 12h5v5h-5z" fill="#7fba00" /><path d="M9.500 18h5v5h-5z" fill="#00a4ef" /><path d="M15.500 18h5v5h-5z" fill="#ffb900" /></svg>
      </TaskItem>
      <TaskItem run>
        <svg width="30" height="30" viewBox="0 0 30 30"><circle cx="15" cy="15" r="15" fill="#fcc419" /><path d="M2 7.500A15 15 0 0 1 28 7.500H15A7.500 7.500 0 0 0 8.500 18.800z" fill="#e33b2e" /><path d="M2 7.500 8.500 18.700A7.500 7.500 0 0 0 21.500 18.700L15 30A15 15 0 0 1 2 7.500z" fill="#2a9d48" /><circle cx="15" cy="15" r="7.500" fill="#fff" /><circle cx="15" cy="15" r="6" fill="#3b7fee" /></svg>
      </TaskItem>
      <TaskItem run>
        <svg width="30" height="30" viewBox="0 0 30 30"><path d="M22 0v8L4 23 1 21q-1.500-1.500 0-3z" fill="#0b6fb5" /><path d="M22 30v-8L4 7 1 9q-1.500 1.500 0 3z" fill="#0a80cf" /><path d="M22 0l7 3.200q1 .5 1 1.800v20q0 1.300-1 1.800L22 30z" fill="#24a3f0" /></svg>
      </TaskItem>
      <TaskItem run>
        <svg width="26" height="30" viewBox="0 0 26 30"><path d="M1.500 1h23v22l1.500 4-1.500 2h-23L0 27l1.500-4z" fill="#c9dff0" stroke="#88a9c8" /><path d="M1 1h24v3H1z" fill="#5f83ac" /><path d="M4 17 9 7l5 10M6 14h6" fill="none" stroke="#f29138" strokeWidth="2" /><path d="M15 10h7M15 13h7" stroke="#6e9bd8" strokeWidth="1.700" /><path d="M3 20h17M3 23h13" stroke="#fff" strokeWidth="1.300" /><path d="M0 26h26l-1.500 3h-23z" fill="#789cc2" /></svg>
      </TaskItem>
      <TaskItem run>
        <svg width="22" height="30" viewBox="0 0 22 30"><path d="M0 2h22v25H0z" fill="#50bcd8" /><path d="M0 27h22v2.500H0z" fill="#9a4e10" /><path d="M3.500 0v4M8.500 0v4M13.500 0v4M18.500 0v4" stroke="#0a6480" strokeWidth="2.600" /><path d="M4 9.500h14M4 14.500h14M4 19.500h14" stroke="#0b6a88" strokeWidth="1.800" /></svg>
      </TaskItem>
      <div className="ml-auto flex h-full items-center">
        <svg width="14" height="9" viewBox="0 0 14 9" fill="none" stroke="#1b1b1b" strokeWidth="1.600"><path d="m1 8 6-6.500L13 8" /></svg>
        <svg width="22" height="22" viewBox="0 0 22 22" className="ml-[22px]" fill="none" stroke="#1b1b1b" strokeWidth="1.300"><path d="M1 10.500a9.500 9.500 0 0 1 18-3.500M19.500 1.500V7H14M2 20.500V15h5.500M2.500 15.500Q5 20 11 20" /><circle cx="15.500" cy="16" r="5" fill="#ff9800" stroke="none" /></svg>
        <svg width="22" height="18" viewBox="0 0 22 18" className="ml-[18px]" fill="#aaa" stroke="#1b1b1b" strokeWidth="1.300"><path d="M6 15.500A4.800 4.800 0 0 1 5.500 6Q7 2 11 2t5.500 4a4.800 4.800 0 0 1 0 9.500z" /><path d="m2.500 1 17 16" /></svg>
        <div className="ml-[20px] w-[34px] text-center"><div>ENG</div><div>IN</div></div>
        <svg width="22" height="16" viewBox="0 0 22 16" className="ml-[19px]" fill="none" stroke="#1b1b1b" strokeWidth="1.300"><path d="M1 6a14 14 0 0 1 20 0M4 9.200a10 10 0 0 1 14 0M7 12a5.800 5.800 0 0 1 8 0" /><circle cx="11" cy="14" r="1.300" fill="#1b1b1b" /></svg>
        <svg width="21" height="18" viewBox="0 0 21 18" className="ml-[9px]" fill="none" stroke="#1b1b1b" strokeWidth="1.200"><path d="M1 6h3.500L9 2v14l-4.500-4H1zM11.500 6q2 3 0 6M14 4q3.700 5 0 10M16.500 2q5.500 7 0 14" /></svg>
        <svg width="22" height="18" viewBox="0 0 22 18" className="ml-[8px]"><rect x="2" y="5" width="16" height="11" rx="2" fill="none" stroke="#1b1b1b" strokeWidth="1.400" /><path d="M5.500 8h10.500v6H4.500zM18.500 8.500H21v4h-2.500z" fill="#1b1b1b" /><path d="M4.500 0v4H7.500L2.500 11V6.500H0z" fill="#1b1b1b" stroke="#eee" strokeWidth=".5" /></svg>
        <div className="mb-[2px] ml-[16px] w-[80px] text-right tracking-[0.050px] whitespace-nowrap"><div>12:19</div><div>14-10-2024</div></div>
        <svg width="18" height="20" viewBox="0 0 18 20" className="mr-[26px] ml-[11px]"><path d="M2.500 14V8a6.500 6.500 0 0 1 13 0v6l1.500 2.500H1z" fill="#28405f" /><path d="M6 18h6q-1 2-3 2t-3-2z" fill="#28405f" /></svg>
      </div>
    </div>
  );
}

export default function App() {
  return (
    <div className="relative h-[1080px] w-[1920px] overflow-hidden bg-[#3b3b3b] font-['Inter',sans-serif]">
      <TabBar />
      <Toolbar />
      <div className="flex h-[927px] pl-[5px]"><Left /><Canvas /><Right /></div>
      <Taskbar />
      <div className="absolute top-[85px] left-[1413px] h-[102px] w-[452px] rounded-[9px] border border-[#5c5c5c] bg-[#4a4a4a] shadow-[0_6px_14px_rgba(0,0,0,0.350)]">
        <div className="mt-[10px] h-[80px] bg-white" />
      </div>
    </div>
  );
}
